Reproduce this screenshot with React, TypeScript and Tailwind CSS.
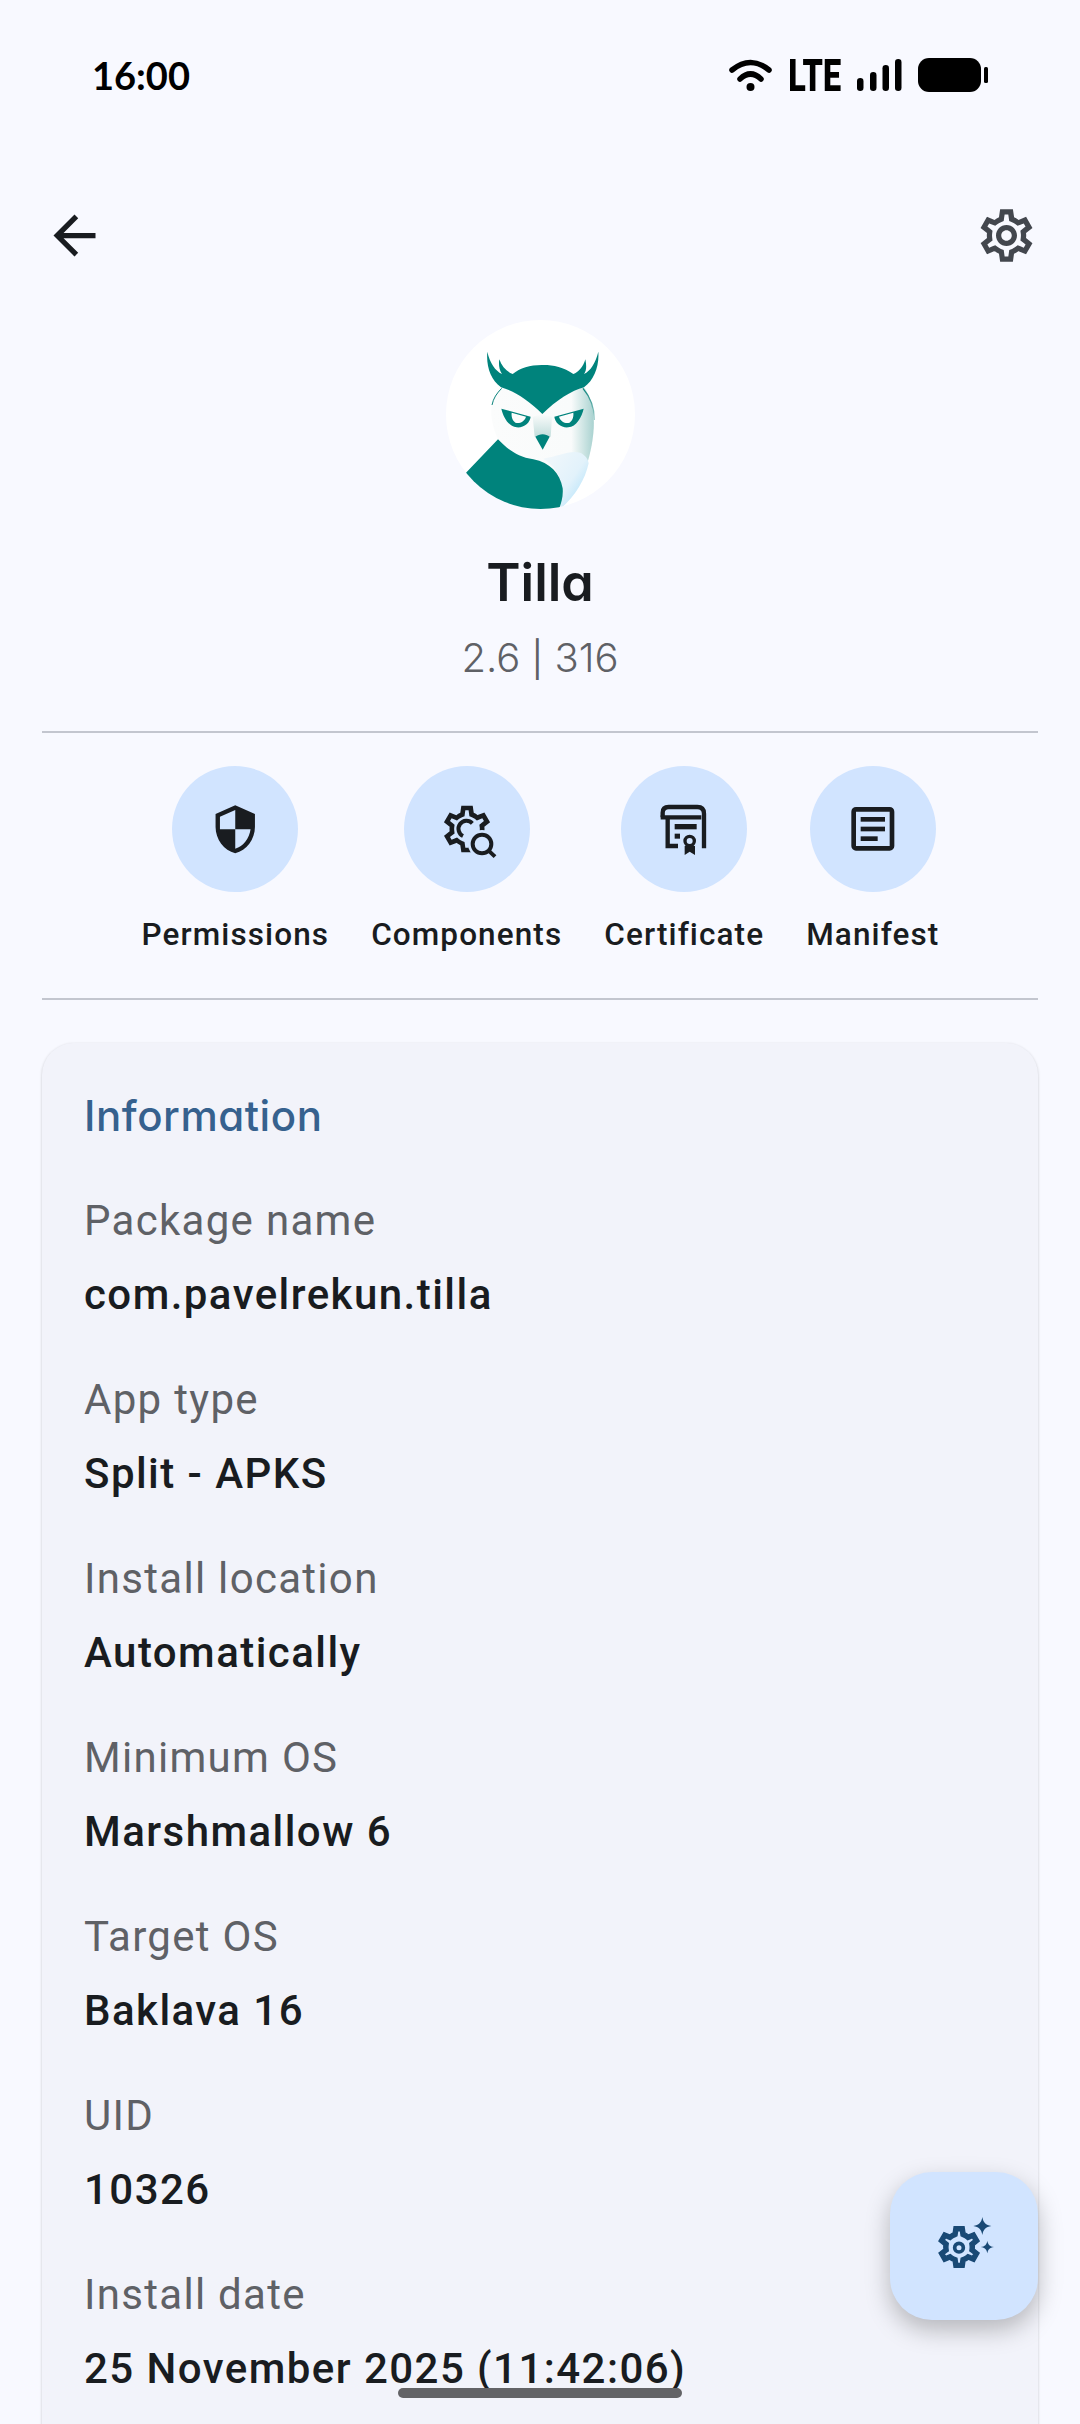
const SETTINGS_OUTER =
  "M19.44 12.99l-.01.02c.04-.33.08-.67.08-1.01 0-.34-.03-.66-.07-.99l.01.02 2.44-1.92-2.43-4.22-2.87 1.16.01.01c-.52-.4-1.09-.74-1.71-1h.01L14.44 2H9.57l-.44 3.07h.01c-.62.26-1.19.6-1.71 1l.01-.01-2.88-1.17-2.44 4.22 2.44 1.92.01-.02c-.04.33-.07.65-.07.99 0 .34.03.68.08 1.01l-.01-.02-2.1 1.65-.33.26 2.43 4.2 2.88-1.15-.02-.04c.53.41 1.1.75 1.73 1.01h-.03L9.58 22h4.85s.03-.18.06-.42l.38-2.65h-.01c.62-.26 1.2-.6 1.73-1.01l-.02.04 2.88 1.15 2.43-4.2s-.14-.12-.33-.26l-2.11-1.66zM17.45 11.27c.04.32.05.53.05.73 0 .2-.02.41-.05.73l-.14 1.13.89.7 1.07.85-.7 1.21-1.27-.51-1.04-.42-.9.68c-.43.32-.84.56-1.25.73l-1.06.43-.16 1.13-.2 1.35h-1.4l-.19-1.35-.16-1.13-1.06-.43c-.43-.18-.83-.41-1.23-.71l-.91-.7-1.06.43-1.27.51-.7-1.21 1.08-.84.89-.7-.14-1.13c-.03-.31-.05-.54-.05-.74s.02-.43.05-.73l.14-1.13-.89-.7-1.08-.84.7-1.21 1.27.51 1.04.42.9-.68c.43-.32.84-.56 1.25-.73l1.06-.43.16-1.13.2-1.35h1.39l.19 1.35.16 1.13 1.06.43c.43.18.83.41 1.23.71l.91.7 1.06-.43 1.27-.51.7 1.21-1.07.85-.89.7.14 1.13z";
const HUB = "M12 8c-2.21 0-4 1.79-4 4s1.79 4 4 4 4-1.79 4-4-1.79-4-4-4zm0 6c-1.1 0-2-.9-2-2s.9-2 2-2 2 .9 2 2-.9 2-2 2z";
const INK = "#191c20";

function Owl() {
  return (
    <svg width="189" height="189" viewBox="138 60 567 567" className="block">
      <defs>
        <clipPath id="owlc">
          <circle cx="421.5" cy="343.5" r="283.5" />
        </clipPath>
        <linearGradient id="belly" x1="0.1" y1="0.1" x2="0.9" y2="0.8">
          <stop offset="0" stopColor="#f0f7fb" />
          <stop offset="0.6" stopColor="#e2f2fb" />
          <stop offset="1" stopColor="#b5e3fa" />
        </linearGradient>
        <linearGradient id="side" x1="0" y1="0" x2="1" y2="0">
          <stop offset="0" stopColor="#fbfcfc" />
          <stop offset="0.78" stopColor="#f9fbfb" />
          <stop offset="1" stopColor="#a9d2d0" />
        </linearGradient>
        <linearGradient id="nose" x1="0" y1="0" x2="0" y2="1">
          <stop offset="0" stopColor="#fbfcfc" />
          <stop offset="1" stopColor="#c2dedc" />
        </linearGradient>
        <linearGradient id="edge" x1="0" y1="0" x2="0" y2="1">
          <stop offset="0" stopColor="#0b837c" />
          <stop offset="1" stopColor="#a9d2d0" />
        </linearGradient>
      </defs>
      <circle cx="421.5" cy="343.5" r="283.5" fill="#ffffff" />
      <g clipPath="url(#owlc)">
        <path
          d="M300,262 C280,290 272,315 274,345 C278,385 290,410 296,420 L480,625 C530,580 570,500 580,400 C586,340 575,295 552,262 L425,250 Z"
          fill="url(#side)"
        />
        <path d="M430,476 C470,470 510,450 540,458 C555,464 565,478 566,490 C555,540 525,590 478,630 C490,590 490,540 460,502 C450,490 440,482 430,476 Z" fill="url(#belly)" />
        <path d="M305,265 C290,280 280,295 276,315" fill="none" stroke="#0b837c" strokeWidth="3" />
        <path d="M549,265 C570,290 583,320 583,360" fill="none" stroke="url(#edge)" strokeWidth="4" />
        <path
          d="M198,518 L294,418 C320,445 350,470 400,478 C450,488 480,520 488,565 C490,590 484,610 476,630 L300,640 L180,540 Z"
          fill="#00837c"
        />
        <path
          d="M262,155 C258,200 272,240 303,262 C340,272 385,300 427,342 C470,300 515,272 552,262 C582,240 598,200 595,155 C586,190 572,212 552,222 C562,208 558,190 556,178 C550,200 535,218 520,222 C490,200 455,194 425,195 C390,195 360,204 338,222 C320,215 305,200 298,178 C296,190 296,208 306,222 C286,212 270,190 262,155 Z"
          fill="#00837c"
        />
        <path d="M398,350 L427,342 L456,350 L452,410 L404,410 Z" fill="url(#nose)" />
        <path d="M304,326 L392,350 C390,368 372,384 350,382 C326,380 310,352 304,326 Z" fill="#00837c" />
        <path d="M335,338 L378,350 C374,364 360,371 350,369 C340,367 333,352 335,338 Z" fill="#fbfcfc" />
        <path d="M551,326 L463,350 C465,368 483,384 505,382 C529,380 545,352 551,326 Z" fill="#00837c" />
        <path d="M520,338 L477,350 C481,364 495,371 505,369 C515,367 522,352 520,338 Z" fill="#fbfcfc" />
        <path d="M406,410 C418,400 438,400 449,410 L428,449 Z" fill="#00837c" />
      </g>
    </svg>
  );
}

function ShieldIcon() {
  return (
    <svg width="52.5" height="52.5" viewBox="0 0 24 24" fill={INK}>
      <path d="M12 1L3 5v6c0 5.55 3.84 10.74 9 12 5.16-1.26 9-6.45 9-12V5l-9-4zm0 10.99h7c-.53 4.12-3.28 7.79-7 8.94V12H5V6.3l7-3.11v8.8z" />
    </svg>
  );
}

function ComponentsIcon() {
  return (
    <svg width="60" height="60" viewBox="950 177 180 180">
      <defs>
        <mask id="lensmask">
          <rect x="900" y="100" width="300" height="300" fill="#fff" />
          <circle cx="1085" cy="312" r="42" fill="#000" />
        </mask>
      </defs>
      <g mask="url(#lensmask)">
        <path transform="translate(956 183) scale(7)" d={SETTINGS_OUTER} fill={INK} fillRule="evenodd" />
      </g>
      <path d="M1056,250 A24,24 0 1 0 1028,288" fill="none" stroke={INK} strokeWidth="12" />
      <circle cx="1085" cy="312" r="28" fill="none" stroke={INK} strokeWidth="12" />
      <path d="M1104,331 L1124,350" stroke={INK} strokeWidth="12" fill="none" />
    </svg>
  );
}

function CertificateIcon() {
  return (
    <svg width="60" height="60" viewBox="220 177 180 180">
      <path d="M246,232 V218 Q246,201 264,201 H350 Q370,201 370,221 V325" fill="none" stroke={INK} strokeWidth="13" />
      <path d="M240,232 H362" fill="none" stroke={INK} strokeWidth="13" />
      <path d="M261,236 V318 H292" fill="none" stroke={INK} strokeWidth="13" />
      <rect x="282" y="252" width="66" height="16" fill={INK} />
      <rect x="282" y="281" width="16" height="15" fill={INK} />
      <circle cx="327" cy="303" r="14" fill="none" stroke={INK} strokeWidth="10" />
      <path d="M312,318 V345 L327,335 L343,345 V318 Z" fill={INK} />
    </svg>
  );
}

function ManifestIcon() {
  return (
    <svg width="60" height="60" viewBox="790 177 180 180">
      <rect x="822" y="208" width="115" height="117" rx="7" fill="none" stroke={INK} strokeWidth="14" />
      <rect x="843" y="231" width="73" height="14" fill={INK} />
      <rect x="843" y="260" width="73" height="14" fill={INK} />
      <rect x="843" y="289" width="51" height="14" fill={INK} />
    </svg>
  );
}

function FabIcon() {
  const c = "#194975";
  return (
    <svg width="60" height="60" viewBox="220 205 180 180">
      <path transform="translate(222 225) scale(6.1)" d={SETTINGS_OUTER} fill={c} stroke={c} strokeWidth="0.7" fillRule="evenodd" />
      <circle cx="295" cy="300" r="13" fill="none" stroke={c} strokeWidth="11" />
      <path d="M365,208 C368,225 375,232 392,235 C375,238 368,245 365,262 C362,245 355,238 338,235 C355,232 362,225 365,208 Z" fill={c} />
      <path d="M380,279 C382,291 387,296 400,298 C387,300 382,305 380,317 C378,305 373,300 360,298 C373,296 378,291 380,279 Z" fill={c} />
    </svg>
  );
}

function Action({ label, icon }: { label: string; icon: React.ReactNode }) {
  return (
    <div className="flex flex-col items-center">
      <div className="w-[126px] h-[126px] rounded-full bg-[#d1e4ff] flex items-center justify-center">{icon}</div>
      <div className="mt-[22px] h-[42px] leading-[42px] text-[31.5px] font-[470] tracking-[1.1px] text-[#191c20] whitespace-nowrap">
        {label}
      </div>
    </div>
  );
}

function Row({ label, value }: { label: string; value: string }) {
  return (
    <div className="flex flex-col gap-[11px] mt-[42px]">
      <div className="h-[63px] leading-[63px] text-[42px] tracking-[1.3px] text-[#5f6166]">{label}</div>
      <div className="h-[63px] leading-[63px] text-[42px] font-[470] tracking-[1.45px] text-[#191c20]">{value}</div>
    </div>
  );
}

export default function App() {
  const rows: [string, string][] = [
    ["Package name", "com.pavelrekun.tilla"],
    ["App type", "Split - APKS"],
    ["Install location", "Automatically"],
    ["Minimum OS", "Marshmallow 6"],
    ["Target OS", "Baklava 16"],
    ["UID", "10326"],
    ["Install date", "25 November 2025 (11:42:06)"],
  ];
  return (
    <div className="relative w-[1080px] h-[2424px] overflow-hidden bg-[#f8f9ff] font-[Roboto,sans-serif]">
      <div className="h-[150px] pl-[92px] pr-[92px] flex items-center justify-between text-black">
        <span className="font-[Lato,sans-serif] font-bold text-[38px] leading-none">16:00</span>
        <div className="flex items-center gap-[16px]">
          <svg width="43" height="32" viewBox="0 0 43 32">
            <path d="M3,11 Q21.5,-4 40,11" fill="none" stroke="#000" strokeWidth="5.5" strokeLinecap="round" />
            <path d="M11,20 Q21.5,10 32,20" fill="none" stroke="#000" strokeWidth="5.5" strokeLinecap="round" />
            <circle cx="21.5" cy="28" r="4" fill="#000" />
          </svg>
          <div className="w-[53px] h-[32px] flex items-center justify-center">
            <span className="font-[Roboto,sans-serif] font-black text-[45px] leading-none scale-x-[0.72]">LTE</span>
          </div>
          <svg width="45" height="32" viewBox="0 0 45 32" fill="#000">
            <rect x="0" y="19" width="6.5" height="13" rx="3.2" />
            <rect x="13" y="13" width="6.5" height="19" rx="3.2" />
            <rect x="25.5" y="6" width="6.5" height="26" rx="3.2" />
            <rect x="38" y="0" width="6.5" height="32" rx="3.2" />
          </svg>
          <svg width="70" height="34" viewBox="0 0 70 34" fill="#000">
            <rect x="0" y="0" width="63" height="34" rx="11" />
            <rect x="66" y="9" width="4" height="16" rx="1.5" />
          </svg>
        </div>
      </div>

      <div className="mt-[54px] pl-[43px] pr-[42px] h-[63px] flex items-center justify-between">
        <svg width="63" height="63" viewBox="0 0 24 24" fill={INK}>
          <path d="M20 11H7.83l5.59-5.59L12 4l-8 8 8 8 1.41-1.41L7.83 13H20v-2z" />
        </svg>
        <svg width="63" height="63" viewBox="0 0 24 24" fill="#43474e">
          <path d={SETTINGS_OUTER + HUB} fillRule="evenodd" />
        </svg>
      </div>

      <div className="mt-[53px] flex flex-col items-center">
        <Owl />
        <div className="mt-[42px] h-[64px] leading-[64px] text-[52px] font-semibold font-[Inter,sans-serif] [font-feature-settings:'cv11'] text-[#191c20]">
          Tilla
        </div>
        <div className="mt-[15px] h-[56px] leading-[56px] text-[40px] font-light font-[Inter,sans-serif] [font-feature-settings:'cv11'] text-[#5f6166]">
          2.6 <span className="text-[35px] font-normal">|</span> 316
        </div>
      </div>

      <div className="mx-[42px] mt-[45px] h-[2px] bg-[#c3c6cf]" />
      <div className="mt-[33px] pl-[1px] flex justify-center gap-[42px]">
        <Action label="Permissions" icon={<ShieldIcon />} />
        <Action label="Components" icon={<ComponentsIcon />} />
        <Action label="Certificate" icon={<CertificateIcon />} />
        <Action label="Manifest" icon={<ManifestIcon />} />
      </div>
      <div className="mx-[42px] mt-[42px] h-[2px] bg-[#c3c6cf]" />

      <div className="mx-[42px] mt-[43px] rounded-[32px] bg-[#f2f3fa] shadow-[0_1px_3px_rgba(0,0,0,0.2)] px-[42px] pt-[41px] pb-[60px]">
        <div className="h-[63px] leading-[63px] text-[42px] font-medium tracking-[0.55px] font-[Inter,sans-serif] [font-feature-settings:'cv11'] text-[#36618e]">
          Information
        </div>
        <div className="mt-[4px]">
          {rows.map(([l, v]) => (
            <Row key={l} label={l} value={v} />
          ))}
        </div>
      </div>

      <div className="absolute left-[890px] top-[2172px] w-[148px] h-[148px] rounded-[42px] bg-[#d1e4ff] shadow-[0_10px_24px_rgba(0,0,0,0.25)] flex items-center justify-center">
        <FabIcon />
      </div>
      <div className="absolute left-[398px] top-[2388px] w-[284px] h-[10px] rounded-[5px] bg-[#636366]" />
    </div>
  );
}
